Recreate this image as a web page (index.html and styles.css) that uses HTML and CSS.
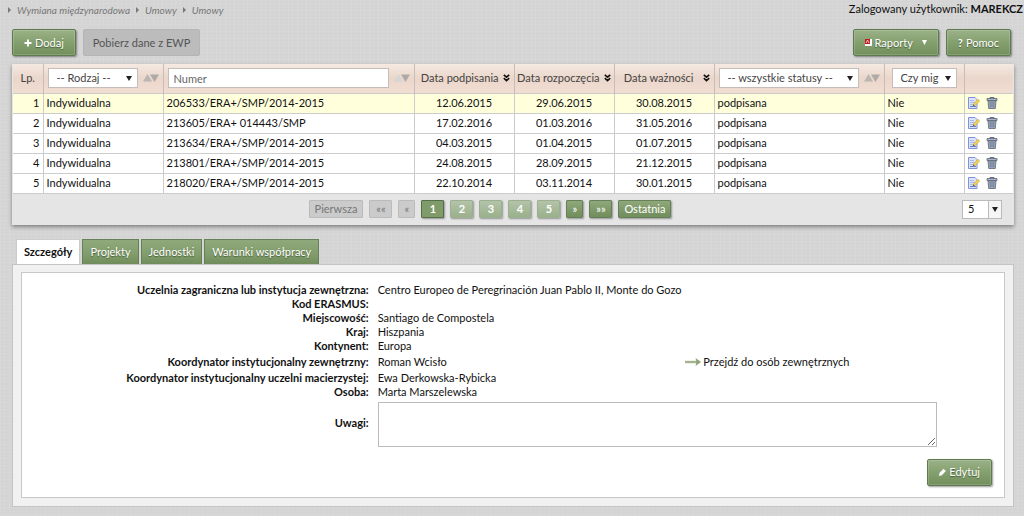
FILE: index.html
```html
<!DOCTYPE html>
<html lang="pl">
<head>
<meta charset="utf-8">
<title>Umowy</title>
<link rel="stylesheet" href="styles.css">
</head>
<body>
<svg class="defs" aria-hidden="true">
  <symbol id="edit" viewBox="0 0 12 12">
    <path d="M.5.5h6.500l2 2v9h-8.500z" fill="#dbe4fc" stroke="#7d92d8"/>
    <path d="M2 3.500h4M2 5.500h5M2 7.500h3" stroke="#a9b9ec"/>
    <path d="M2 9.500h6" stroke="#5f79c9"/>
    <path d="M5 9l.7-2.300L10 2.300l1.700 1.600-4.400 4.400z" fill="#f5d648" stroke="#c2a548" stroke-width=".6"/>
    <path d="M5 9l.5-1.700 1.200 1.200z" fill="#444"/>
  </symbol>
  <symbol id="trash" viewBox="0 0 12 12">
    <path d="M4 1.500V.5h4v1" fill="none" stroke="#66707f"/>
    <path d="M1 1.500h10v2H1z" fill="#a9b5c7" stroke="#5a6474" stroke-width=".8"/>
    <path d="M2 4h8l-.7 7.500H2.700z" fill="#a5b2c8" stroke="#5a6474" stroke-width=".8"/>
    <path d="M4.200 5v5.500M6 5v5.500M7.800 5v5.500" stroke="#5d687a" stroke-width=".8"/>
  </symbol>
  <symbol id="chev" viewBox="0 0 7 8">
    <path d="M.8.8l2.700 2.400L6.200.8M.8 4.200l2.700 2.400 2.700-2.400" fill="none" stroke="#111" stroke-width="1.600"/>
  </symbol>
  <symbol id="sort" viewBox="0 0 16 8">
    <path d="M0 7.500L4.500 0 9 7.500z" fill="#bcb6b3"/><path d="M7 .5h9L11.500 8z" fill="#b0aaa7"/>
  </symbol>
  <symbol id="sortdown" viewBox="0 0 16 8">
    <path d="M0 7.500L4.500 0 9 7.500z" fill="#d6d6d4"/><path d="M7 .5h9L11.500 8z" fill="#aeaaa8"/>
  </symbol>
</svg>

<header class="top">
  <nav class="crumbs" aria-label="Ścieżka"><a href="#">Wymiana międzynarodowa</a><a href="#">Umowy</a><a href="#">Umowy</a></nav>
  <div class="user">Zalogowany użytkownik: <b>MAREKCZ</b></div>
</header>

<main>
  <div class="toolbar">
    <button class="btn"><svg width="8" height="8" viewBox="0 0 8 8"><path d="M4 .5v7M.5 4h7" stroke="#fff" stroke-width="1.800"/></svg>Dodaj</button>
    <button class="btn off" disabled>Pobierz dane z EWP</button>
    <span class="grow"></span>
    <button class="btn"><svg width="7" height="7" viewBox="0 0 7 7"><path d="M0 0h7v7H0z" fill="#fff"/><path d="M0 0h5v5H0z" fill="#c8171e"/><path d="M1 4l1.500-3L4 4" fill="none" stroke="#fff" stroke-width=".7"/></svg>Raporty<svg class="caret" width="5" height="5" viewBox="0 0 5 5"><path d="M0 0h5L2.500 5z" fill="#fff"/></svg></button>
    <button class="btn"><b>?</b> Pomoc</button>
  </div>

  <section class="list">
    <table>
      <colgroup><col class="c-no"><col class="c-kind"><col class="c-num"><col class="c-date"><col class="c-date"><col class="c-date"><col class="c-status"><col class="c-mig"><col class="c-act"></colgroup>
      <thead><tr>
        <th>Lp.</th>
        <th><div class="filter"><span class="sel"><select aria-label="Rodzaj"><option>-- Rodzaj --</option></select></span><svg width="16" height="8"><use href="#sort"/></svg></div></th>
        <th><div class="filter"><input type="text" placeholder="Numer" aria-label="Numer"><svg width="16" height="8"><use href="#sortdown"/></svg></div></th>
        <th><div class="date">Data podpisania<svg width="7" height="8"><use href="#chev"/></svg></div></th>
        <th><div class="date">Data rozpoczęcia<svg width="7" height="8"><use href="#chev"/></svg></div></th>
        <th><div class="date">Data ważności<svg width="7" height="8"><use href="#chev"/></svg></div></th>
        <th><div class="filter"><span class="sel"><select aria-label="Status"><option>-- wszystkie statusy --</option></select></span><svg width="16" height="8"><use href="#sort"/></svg></div></th>
        <th><div class="filter mig"><span class="sel"><select aria-label="Czy mig"><option>Czy mig</option></select></span></div></th>
        <th></th>
      </tr></thead>
      <tbody>
        <tr class="current"><td>1</td><td>Indywidualna</td><td>206533/ERA+/SMP/2014-2015</td><td>12.06.2015</td><td>29.06.2015</td><td>30.08.2015</td><td>podpisana</td><td>Nie</td><td><div class="acts"><button aria-label="Edytuj"><svg width="12" height="12"><use href="#edit"/></svg></button><button aria-label="Usuń"><svg width="12" height="12"><use href="#trash"/></svg></button></div></td></tr>
        <tr><td>2</td><td>Indywidualna</td><td>213605/ERA+ 014443/SMP</td><td>17.02.2016</td><td>01.03.2016</td><td>31.05.2016</td><td>podpisana</td><td>Nie</td><td><div class="acts"><button aria-label="Edytuj"><svg width="12" height="12"><use href="#edit"/></svg></button><button aria-label="Usuń"><svg width="12" height="12"><use href="#trash"/></svg></button></div></td></tr>
        <tr><td>3</td><td>Indywidualna</td><td>213634/ERA+/SMP/2014-2015</td><td>04.03.2015</td><td>01.04.2015</td><td>01.07.2015</td><td>podpisana</td><td>Nie</td><td><div class="acts"><button aria-label="Edytuj"><svg width="12" height="12"><use href="#edit"/></svg></button><button aria-label="Usuń"><svg width="12" height="12"><use href="#trash"/></svg></button></div></td></tr>
        <tr><td>4</td><td>Indywidualna</td><td>213801/ERA+/SMP/2014-2015</td><td>24.08.2015</td><td>28.09.2015</td><td>21.12.2015</td><td>podpisana</td><td>Nie</td><td><div class="acts"><button aria-label="Edytuj"><svg width="12" height="12"><use href="#edit"/></svg></button><button aria-label="Usuń"><svg width="12" height="12"><use href="#trash"/></svg></button></div></td></tr>
        <tr><td>5</td><td>Indywidualna</td><td>218020/ERA+/SMP/2014-2015</td><td>22.10.2014</td><td>03.11.2014</td><td>30.01.2015</td><td>podpisana</td><td>Nie</td><td><div class="acts"><button aria-label="Edytuj"><svg width="12" height="12"><use href="#edit"/></svg></button><button aria-label="Usuń"><svg width="12" height="12"><use href="#trash"/></svg></button></div></td></tr>
      </tbody>
    </table>
    <div class="pager">
      <div class="pages">
        <button class="pg off" disabled>Pierwsza</button><button class="pg off" disabled>««</button><button class="pg off narrow" disabled>«</button><button class="pg num on">1</button><button class="pg num">2</button><button class="pg num">3</button><button class="pg num">4</button><button class="pg num">5</button><button class="pg narrow">»</button><button class="pg">»»</button><button class="pg last">Ostatnia</button>
      </div>
      <span class="size"><select aria-label="Liczba wierszy"><option>5</option></select></span>
    </div>
  </section>

  <div class="tabs" role="tablist">
    <button class="tab active" role="tab" aria-selected="true">Szczegóły</button><button class="tab" role="tab">Projekty</button><button class="tab" role="tab">Jednostki</button><button class="tab" role="tab">Warunki współpracy</button>
  </div>
  <section class="panel">
    <div class="sheet">
      <dl class="details">
        <dt>Uczelnia zagraniczna lub instytucja zewnętrzna:</dt><dd class="wide">Centro Europeo de Peregrinación Juan Pablo II, Monte do Gozo</dd>
        <dt>Kod ERASMUS:</dt><dd class="wide"></dd>
        <dt>Miejscowość:</dt><dd class="wide">Santiago de Compostela</dd>
        <dt>Kraj:</dt><dd class="wide">Hiszpania</dd>
        <dt>Kontynent:</dt><dd class="wide">Europa</dd>
        <dt class="tall">Koordynator instytucjonalny zewnętrzny:</dt><dd class="tall">Roman Wcisło</dd>
        <dd class="tall"><a class="go" href="#"><svg width="16" height="8" viewBox="0 0 16 8"><path d="M0 4h12" stroke="#a3b38c" stroke-width="2.400"/><path d="M10.500 0L16 4l-5.500 4 1-4z" fill="#8fa277"/></svg>Przejdź do osób zewnętrznych</a></dd>
        <dt>Koordynator instytucjonalny uczelni macierzystej:</dt><dd class="wide">Ewa Derkowska-Rybicka</dd>
        <dt>Osoba:</dt><dd class="wide">Marta Marszelewska</dd>
        <dt class="notes"><label for="uwagi">Uwagi:</label></dt><dd class="wide"><textarea id="uwagi"></textarea></dd>
      </dl>
      <div class="foot"><button class="btn"><svg width="7" height="8" viewBox="0 0 7 8"><path d="M0 8l.5-3L4.500.8 6.800 3 2.800 7.300z" fill="#fff"/></svg>Edytuj</button></div>
    </div>
  </section>
</main>
</body>
</html>
```
FILE: styles.css
```css
* { box-sizing: border-box; }
body {
  margin: 0;
  font: 11px/14px Lato, "Liberation Sans", sans-serif;
  color: #111;
  background:
    repeating-linear-gradient(0deg, rgba(255,255,255,.08) 0 1px, transparent 1px 3px, rgba(255,255,255,.05) 3px 4px, transparent 4px 7px),
    repeating-linear-gradient(90deg, rgba(255,255,255,.08) 0 1px, transparent 1px 4px, rgba(255,255,255,.05) 4px 5px, transparent 5px 9px),
    #d4d4d4;
}
button, input, select, textarea { font: inherit; color: inherit; }
button { padding: 0; border: 0; background: none; white-space: nowrap; }
.defs { position: absolute; width: 0; height: 0; }

.top { display: flex; justify-content: space-between; padding: 2px 1px 0 8px; height: 29px; }
.crumbs { display: flex; gap: 6px; font-size: 10px; font-style: italic; }
.crumbs a { display: flex; align-items: center; gap: 6px; height: 16px; color: #777; text-decoration: none; }
.crumbs a::before { content: ""; border: solid transparent; border-width: 3px 0 3px 3px; border-left-color: #777; }

main { padding: 0 10px 8px 12px; }
.toolbar { display: flex; gap: 7px; padding: 0 3px 8px 0; }
.grow { flex: 1; }
.btn {
  display: flex; align-items: center; justify-content: center; gap: 3px;
  height: 27px; padding: 0 11px;
  color: #fff; text-shadow: 0 1px 1px #4a5b3b;
  border: 1px solid #5f7a50; border-radius: 2px;
  background: linear-gradient(#9bb188, #84a06e 50%, #738f5c);
  box-shadow: inset 0 0 0 1px rgba(255,255,255,.15), 1px 1px 2px rgba(0,0,0,.4);
}
.btn.off { padding: 0 9px; color: #555; text-shadow: none; border-color: #b5b5b5; background: #bcbcbc; box-shadow: none; }
.caret { margin-left: 6px; }

.list { background: #e5e5e5; box-shadow: 0 2px 4px rgba(0,0,0,.4); border: 1px solid #e9e4e1; border-width: 0 1px; }
table { width: 100%; border-collapse: collapse; table-layout: fixed; }
.c-no { width: 3%; } .c-kind { width: 12%; } .c-num { width: 25.1%; } .c-date { width: 10%; }
.c-status { width: 17%; } .c-mig { width: 8%; } .c-act { width: 4.9%; }
th { height: 29px; padding: 0 4px; font-weight: 400; color: #444; background: linear-gradient(#f5e9e2, #ead6ca 50%, #f1ddd2); border-right: 1px solid #c5bdb8; white-space: nowrap; }
td { height: 20px; padding: 0 3px; background: #fff; border: 1px solid #ccc; border-width: 1px 1px 1px 0; }
th:last-child, td:last-child { border-right: 0; }
.current td { background: #ffffdc; }
td:first-child { text-align: right; }
td:nth-child(4), td:nth-child(5), td:nth-child(6) { text-align: center; }
.filter { display: flex; align-items: center; gap: 5px; }
.filter svg, .date svg { flex: none; }
.filter.mig { padding: 0 3px; }
.filter input, .sel { flex: 1; min-width: 0; height: 20px; background: #fff; border: 1px solid #c4bdb9; }
.filter input { padding: 0 5px; }
.filter input::placeholder { color: #666; opacity: 1; }
.sel, .size { position: relative; display: block; }
select { appearance: none; width: 100%; height: 100%; padding: 0 8px; border: 0; background: none; }
.sel::after, .size::after { content: ""; position: absolute; right: 5px; top: 7px; border: solid transparent; border-width: 5px 3px 0; border-top-color: #222; pointer-events: none; }
.date { display: flex; align-items: center; justify-content: flex-end; gap: 4px; }
th:nth-child(5) { padding: 0 3px; }
th:nth-child(6) .date { gap: 9px; }
.acts { display: flex; gap: 6px; }
.acts svg { display: block; }

.pager { position: relative; display: flex; justify-content: center; padding: 6px 0 7px; }
.pages { display: flex; gap: 6px; margin-right: 46px; }
.pg {
  height: 18px; padding: 0 5px; color: #fff;
  border: 1px solid #66805a; border-radius: 1px;
  background: linear-gradient(#8fa87a, #718d5c);
  box-shadow: 1px 1px 2px rgba(0,0,0,.35);
}
.pg.num { width: 23px; font-weight: 700; background: linear-gradient(#b3c3a8, #9bb08c); border-color: #9caf90; }
.pg.num.on { background: #7f9b6a; border-color: #566e48; }
.pg.off { color: #777; border-color: #bbb; background: #cbcbcb; box-shadow: none; }
.pg:nth-child(2), .pg:nth-child(10) { width: 23px; }
.pg.narrow { width: 17px; }
.size { position: absolute; right: 11px; top: 6px; width: 40px; height: 19px; border: 1px solid #bbb; background: linear-gradient(90deg, #fff 25px, #bbb 25px 26px, #f5f5f5 26px); }
.size select { padding: 0 5px; }
.size::after { right: 3px; top: 6px; }

.tabs { display: flex; gap: 2px; padding: 14px 4px 0; }
.tab { height: 25px; padding: 0 7px; color: #fff; text-shadow: 0 1px 1px #4a5b3b; border: 1px solid #66805a; border-bottom: 0; background: linear-gradient(#90a97c, #819d6b 60%, #718c5b); }
.tab.active { color: #111; font-weight: 700; text-shadow: none; background: #fff; border-color: #ccc; }
.panel { padding: 7px 8px 8px; background: #f1f1f1; border: 1px solid #c4c4c4; }
.sheet { background: #fff; border: 1px solid #c8c8c8; padding: 10px 12px 11px 0; }
.details { display: grid; grid-template-columns: 347fr 299fr 307fr; column-gap: 9px; margin: 0; line-height: 14px; }
dt { grid-column: 1; text-align: right; font-weight: 700; }
dd { margin: 0; }
.wide { grid-column: 2 / 4; }
.tall { padding: 2px 0; }
.go { display: flex; align-items: center; gap: 2px; color: #111; text-decoration: none; }
.notes { align-self: center; }
textarea { display: block; width: 91%; height: 45px; margin-top: 3px; border: 1px solid #bbb; background: #fff; }
.foot { display: flex; justify-content: flex-end; padding-top: 12px; }
```
